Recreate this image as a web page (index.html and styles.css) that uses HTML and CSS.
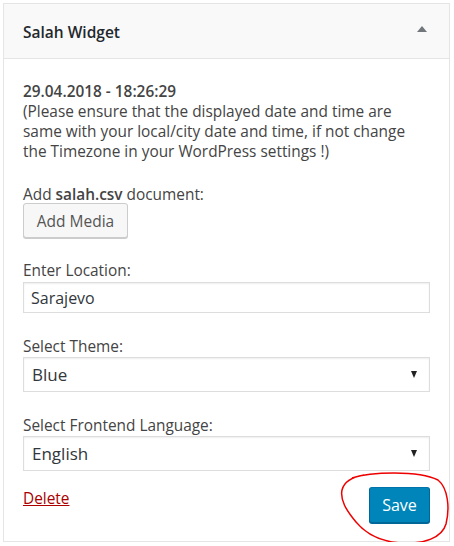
FILE: index.html
```html
<!DOCTYPE html>
<html>
<head>
<meta charset="utf-8">
<link rel="stylesheet" href="styles.css">
</head>
<body>
<div class="widget">
  <div class="widget-top">
    <h3 class="title">Salah Widget</h3>
    <span class="toggle"></span>
  </div>
  <div class="widget-inside">
    <p class="info"><strong>29.04.2018 - 18:26:29</strong><br>(Please ensure that the displayed date and time are same with your local/city date and time, if not change the Timezone in your WordPress settings !)</p>
    <div class="field field-media">
      <div class="label">Add <strong>salah.csv</strong> document:</div>
      <button class="btn">Add Media</button>
    </div>
    <div class="field">
      <div class="label">Enter Location:</div>
      <div class="input">Sarajevo</div>
    </div>
    <div class="field">
      <div class="label">Select Theme:</div>
      <div class="select"><span>Blue</span><span class="caret"></span></div>
    </div>
    <div class="field">
      <div class="label">Select Frontend Language:</div>
      <div class="select"><span>English</span><span class="caret"></span></div>
    </div>
    <div class="actions">
      <a class="delete" href="#">Delete</a>
      <div class="save-wrap">
        <button class="btn-primary">Save</button>
        <svg class="circle" width="114" height="76" viewBox="0 0 114 76"><path d="M14 8 C32 2 80 0 100 10 C110 18 112 38 108 54 C104 68 86 74 64 73 C44 72 28 64 18 52 C8 40 2 30 4 20 C6 12 14 7 26 5" fill="none" stroke="#e00" stroke-width="1.5"/></svg>
      </div>
    </div>
  </div>
</div>
</body>
</html>
```
FILE: styles.css
```css
html, body { margin: 0; padding: 0; background: #fff; }
body { padding: 3px 5px 0 3px; font-family: "Open Sans", "Noto Sans", sans-serif; color: #444; font-size: 15.4px; }
.widget { border: 1px solid #e5e5e5; background: #fff; box-sizing: border-box; width: 447px; height: 539px; }
.widget-top { height: 54px; background: #f9f9f9; border-bottom: 1px solid #e5e5e5; display: flex; align-items: center; justify-content: space-between; padding: 0 19px; }
.title { margin: 0; padding-top: 2px; font-size: 15.5px; font-weight: 600; color: #23282d; }
.toggle { width: 0; height: 0; border-left: 5px solid transparent; border-right: 5px solid transparent; border-bottom: 6px solid #72777c; margin-top: -4px; margin-right: 3px; }
.widget-inside { padding: 23px 19px 0 19px; }
.info { margin: 0 0 23px; line-height: 20px; }
.info strong { color: #444; font-weight: 600; }
.field { margin-bottom: 24px; }
.field-media { margin-bottom: 23px; }
.label { line-height: 20px; }
.label strong { font-weight: 600; }
.btn { display: block; margin-top: -2px; height: 35px; width: 105px; border: 1px solid #ccc; border-radius: 3px; background: #f7f7f7; box-shadow: 0 1px 0 #ccc; font-family: inherit; font-size: 15.5px; color: #555; padding: 0; }
.input { margin-top: 1px; height: 31px; box-sizing: border-box; border: 1px solid #ddd; box-shadow: inset 0 1px 2px rgba(0,0,0,.07); display: flex; align-items: center; padding-left: 7px; font-size: 16px; color: #32373c; }
.select { margin-top: 0; height: 35px; box-sizing: border-box; border: 1px solid #ddd; box-shadow: inset 0 1px 2px rgba(0,0,0,.07); display: flex; align-items: center; justify-content: space-between; padding: 0 12px 0 8px; font-size: 17px; color: #32373c; }
.caret { width: 0; height: 0; border-left: 3px solid transparent; border-right: 3px solid transparent; border-top: 7px solid #222; }
.actions { display: flex; justify-content: space-between; align-items: flex-start; margin-top: -8px; }
.delete { color: #a00; font-size: 15.4px; margin-top: 2px; line-height: 20px; }
.save-wrap { position: relative; }
.btn-primary { display: block; height: 36px; width: 61px; background: #0085ba; border: 1px solid #0073aa; border-color: #0073aa #006799 #006799; border-radius: 3px; box-shadow: 0 1px 0 #006799; color: #fff; font-family: inherit; font-size: 16px; padding: 0; }
.circle { position: absolute; left: -31px; top: -17px; pointer-events: none; }
```
